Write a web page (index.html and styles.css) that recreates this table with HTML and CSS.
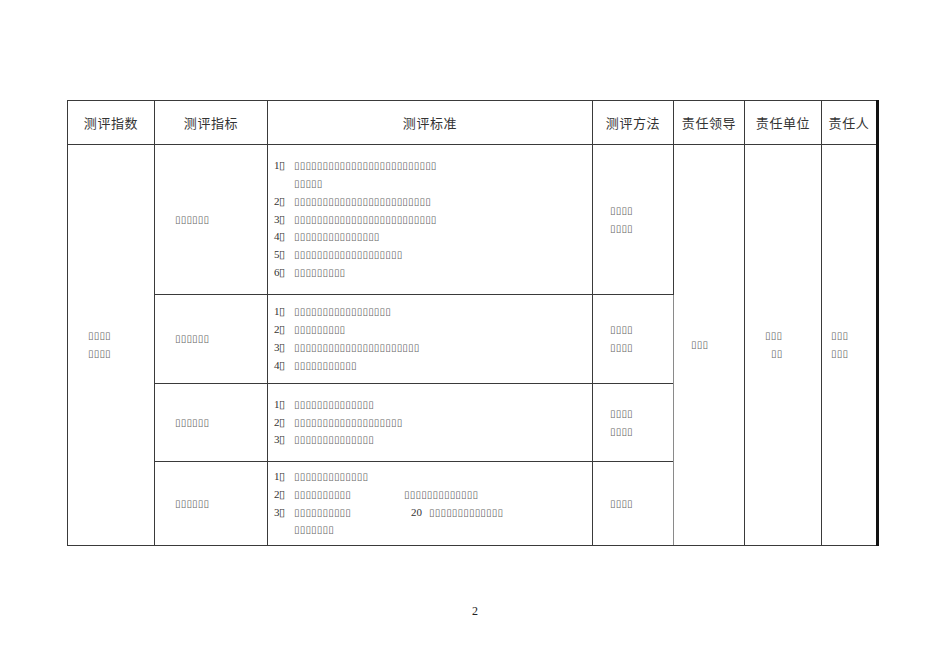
FILE: index.html
```html
<!DOCTYPE html>
<html lang="zh">
<head>
<meta charset="utf-8">
<title>测评表</title>
<link rel="stylesheet" href="styles.css">
</head>
<body>
<div class="page">
  <table class="grid">
    <colgroup>
      <col class="c1"><col class="c2"><col class="c3"><col class="c4"><col class="c5"><col class="c6"><col class="c7">
    </colgroup>
    <tr class="head">
      <th>测评指数</th><th>测评指标</th><th>测评标准</th><th>测评方法</th><th>责任领导</th><th class="lgray">责任单位</th><th>责任人</th>
    </tr>
    <tr class="r1">
      <td rowspan="4" class="box pad20"><div>▯▯▯▯</div><div>▯▯▯▯</div></td>
      <td class="box pad20">▯▯▯▯▯▯</td>
      <td class="std">
        <div class="ln"><span class="n">1▯</span>▯▯▯▯▯▯▯▯▯▯▯▯▯▯▯▯▯▯▯▯▯▯▯▯▯</div>
        <div class="ln"><span class="n"></span>▯▯▯▯▯</div>
        <div class="ln"><span class="n">2▯</span>▯▯▯▯▯▯▯▯▯▯▯▯▯▯▯▯▯▯▯▯▯▯▯▯</div>
        <div class="ln"><span class="n">3▯</span>▯▯▯▯▯▯▯▯▯▯▯▯▯▯▯▯▯▯▯▯▯▯▯▯▯</div>
        <div class="ln"><span class="n">4▯</span>▯▯▯▯▯▯▯▯▯▯▯▯▯▯▯</div>
        <div class="ln"><span class="n">5▯</span>▯▯▯▯▯▯▯▯▯▯▯▯▯▯▯▯▯▯▯</div>
        <div class="ln"><span class="n">6▯</span>▯▯▯▯▯▯▯▯▯</div>
      </td>
      <td class="box pad17"><div>▯▯▯▯</div><div>▯▯▯▯</div></td>
      <td rowspan="4" class="box pad17 gray">▯▯▯</td>
      <td rowspan="4" class="box unit"><div>▯▯▯</div><div class="indent">▯▯</div></td>
      <td rowspan="4" class="box pad9 gray last"><div>▯▯▯</div><div>▯▯▯</div></td>
    </tr>
    <tr class="r2">
      <td class="box pad20">▯▯▯▯▯▯</td>
      <td class="std">
        <div class="ln"><span class="n">1▯</span>▯▯▯▯▯▯▯▯▯▯▯▯▯▯▯▯▯</div>
        <div class="ln"><span class="n">2▯</span>▯▯▯▯▯▯▯▯▯</div>
        <div class="ln"><span class="n">3▯</span>▯▯▯▯▯▯▯▯▯▯▯▯▯▯▯▯▯▯▯▯▯▯</div>
        <div class="ln"><span class="n">4▯</span>▯▯▯▯▯▯▯▯▯▯▯</div>
      </td>
      <td class="box pad17"><div>▯▯▯▯</div><div>▯▯▯▯</div></td>
    </tr>
    <tr class="r3">
      <td class="box pad20">▯▯▯▯▯▯</td>
      <td class="std">
        <div class="ln"><span class="n">1▯</span>▯▯▯▯▯▯▯▯▯▯▯▯▯▯</div>
        <div class="ln"><span class="n">2▯</span>▯▯▯▯▯▯▯▯▯▯▯▯▯▯▯▯▯▯▯</div>
        <div class="ln"><span class="n">3▯</span>▯▯▯▯▯▯▯▯▯▯▯▯▯▯</div>
      </td>
      <td class="box pad17"><div>▯▯▯▯</div><div>▯▯▯▯</div></td>
    </tr>
    <tr class="r4">
      <td class="box pad20">▯▯▯▯▯▯</td>
      <td class="std">
        <div class="ln"><span class="n">1▯</span>▯▯▯▯▯▯▯▯▯▯▯▯▯</div>
        <div class="ln"><span class="n">2▯</span><span class="seg">▯▯▯▯▯▯▯▯▯▯</span><span class="gap2">▯▯▯▯▯▯▯▯▯▯▯▯▯</span></div>
        <div class="ln"><span class="n">3▯</span><span class="seg">▯▯▯▯▯▯▯▯▯▯</span><span class="gap3"><span class="num">20</span>▯▯▯▯▯▯▯▯▯▯▯▯▯</span></div>
        <div class="ln"><span class="n"></span>▯▯▯▯▯▯▯</div>
      </td>
      <td class="box pad17"><div>▯▯▯▯</div></td>
    </tr>
  </table>
  <div class="pageno">2</div>
</div>
</body>
</html>
```
FILE: styles.css
```css
html, body {
  margin: 0;
  padding: 0;
  background: #ffffff;
}
.page {
  width: 950px;
  height: 672px;
  padding: 100px 0 0 67px;
  box-sizing: border-box;
}
.grid {
  border-collapse: collapse;
  table-layout: fixed;
  width: 810px;
  color: #222;
}
.c1 { width: 87px; }
.c2 { width: 113px; }
.c3 { width: 325px; }
.c4 { width: 81px; }
.c5 { width: 71px; }
.c6 { width: 77px; }
.c7 { width: 56px; }
.grid th, .grid td {
  border: 1px solid #3a3a3a;
  padding: 0;
  vertical-align: middle;
}
.grid th {
  font-family: "Noto Sans CJK SC", "Noto Sans", sans-serif;
  font-weight: normal;
  font-size: 13px;
  letter-spacing: 0.6px;
  text-align: center;
  color: #333;
}
.grid th:last-child, .grid td.last { border-right: 3px solid #111; }
.head { height: 44px; }
.r1 { height: 150px; }
.r2 { height: 89px; }
.r3 { height: 78px; }
.r4 { height: 84px; }
.box {
  font-family: "DejaVu Sans", sans-serif;
  font-size: 10px;
  line-height: 18px;
  color: #666;
  letter-spacing: 0.2px;
  text-align: left;
}
.pad20 { padding-left: 20px !important; }
.pad17 { padding-left: 17px !important; }
.pad9 { padding-left: 9px !important; }
.unit { padding-left: 20px !important; }
.indent { padding-left: 6px; }
.gray { border-left-color: #8a8a8a !important; }
.std {
  font-family: "DejaVu Sans", sans-serif;
  font-size: 10px;
  line-height: 17.8px;
  color: #666;
  letter-spacing: 0.2px;
  padding-left: 6px !important;
}
.ln { white-space: nowrap; }
.n {
  display: inline-block;
  width: 20px;
  letter-spacing: -1px;
  font-family: "Liberation Serif", serif;
  font-size: 11px;
  color: #333;
}
.gap2 { margin-left: 53px; }
.gap3 { margin-left: 60px; }
.num {
  font-family: "Liberation Serif", serif;
  font-size: 11px;
  color: #333;
  letter-spacing: 0;
  margin-right: 7px;
}
.pageno {
  margin-top: 58px;
  margin-left: 405px;
  font-family: "Liberation Serif", serif;
  font-size: 12px;
  color: #222;
}
```
